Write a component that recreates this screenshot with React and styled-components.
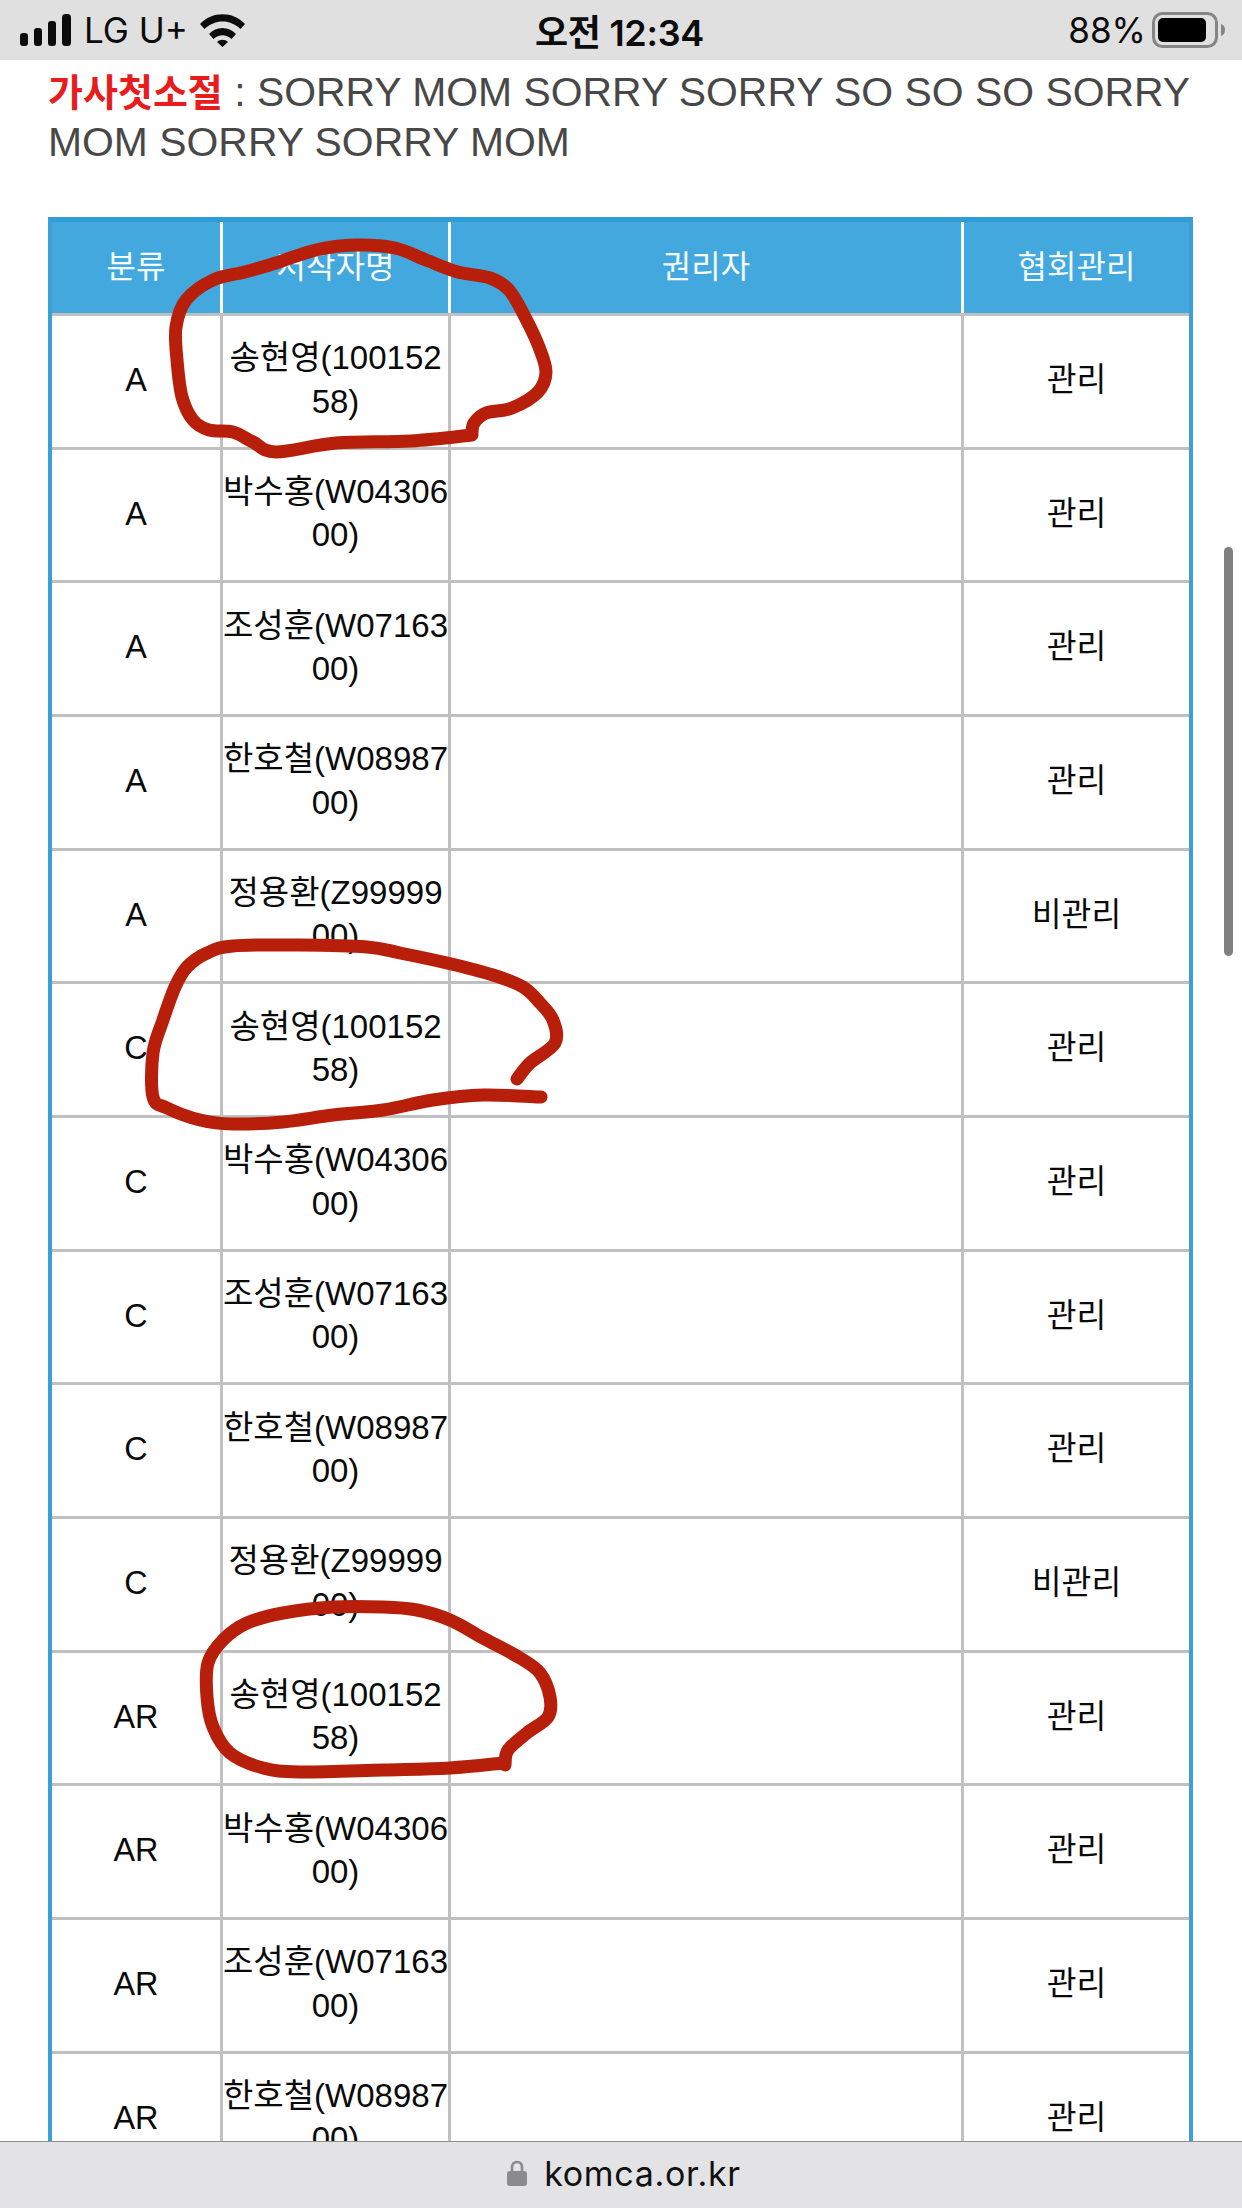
import React from 'react';
import styled, { createGlobalStyle } from 'styled-components';

const GlobalStyle = createGlobalStyle`
  html, body {
    margin: 0;
    padding: 0;
    background: #fff;
  }
  * {
    box-sizing: border-box;
  }
`;

const Page = styled.div`
  position: relative;
  display: flex;
  flex-direction: column;
  width: 1242px;
  height: 2208px;
  overflow: hidden;
  background: #fff;
  font-family: 'Liberation Sans', 'Noto Sans CJK KR', sans-serif;
`;

const StatusBar = styled.div`
  display: grid;
  grid-template-columns: 1fr auto 1fr;
  align-items: center;
  flex: none;
  height: 60px;
  padding: 0 16px 0 20px;
  background: #e0e0e0;
  color: #0c0c0c;
  font-family: Inter, 'Noto Sans CJK KR', sans-serif;
  font-size: 35px;
`;

const StatusLeft = styled.div`
  display: flex;
  align-items: center;
  gap: 12px;
`;

const StatusRight = styled.div`
  display: flex;
  align-items: center;
  justify-content: flex-end;
  gap: 6px;
`;

const Clock = styled.span`
  margin-right: 7px;
  font-weight: 600;
  font-size: 36px;
  letter-spacing: -0.3px;
`;

const Content = styled.main`
  flex: 1;
  min-height: 0;
  overflow: hidden;
  padding: 7px 49px 0 48px;
`;

const Lyric = styled.p`
  margin: 0 0 50px;
  font-size: 40.9px;
  line-height: 50px;
  color: #484848;
`;

const LyricLabel = styled.strong`
  font-size: 38px;
  line-height: 1;
  font-weight: 700;
  color: #e81c1c;
`;

const Board = styled.div`
  width: 1145px;
  border-style: solid;
  border-color: #2f9cd6 #3ba0d6;
  border-width: 5px 4px 0;
`;

const Row = styled.div`
  display: grid;
  grid-template-columns: 171px 228px 513px 1fr;
  height: 133.67px;
`;

const HeadRow = styled(Row)`
  height: 91px;
  background: #42a8de;
  color: #f4fafd;
`;

const Cell = styled.div`
  display: flex;
  align-items: center;
  justify-content: center;
  padding-bottom: 1px;
  border-right: 3px solid #c0c0c0;
  border-top: 3px solid #c0c0c0;
  font-size: 32.4px;
  line-height: 43.5px;
  color: #0a0a0a;
  text-align: center;
  &:last-child {
    border-right: 0;
  }
`;

const HeadCell = styled.div`
  display: flex;
  align-items: center;
  justify-content: center;
  padding-bottom: 7px;
  border-right: 3px solid #fff;
  font-size: 32px;
  &:last-child {
    border-right: 0;
  }
`;

const NameText = styled.span`
  width: 225px;
  padding-bottom: 2px;
  font-size: 33px;
  line-height: 43.5px;
  word-break: break-all;
`;

const BottomBar = styled.div`
  display: flex;
  align-items: center;
  justify-content: center;
  gap: 17px;
  flex: none;
  height: 67px;
  padding: 0 0 4px 6px;
  border-top: 1px solid #8e8e8e;
  background: #e3e3e5;
  color: #111;
  font-family: Inter, sans-serif;
  font-size: 34px;
  letter-spacing: 0.7px;
`;

const ScrollThumb = styled.div`
  position: absolute;
  top: 547px;
  left: 1224px;
  width: 9px;
  height: 409px;
  border-radius: 5px;
  background: #808080;
`;

const InkLayer = styled.svg`
  position: absolute;
  top: 0;
  left: 0;
  pointer-events: none;
`;

const InkStroke = styled.path`
  fill: none;
  stroke: #b81f0a;
  stroke-width: 13;
  stroke-linecap: round;
  stroke-linejoin: round;
`;

const names = ['송현영(10015258)', '박수홍(W0430600)', '조성훈(W0716300)', '한호철(W0898700)', '정용환(Z9999900)'];
const managed = ['관리', '관리', '관리', '관리', '비관리'];

const rows = [];
['A', 'C', 'AR'].forEach(kind => {
  names.forEach((name, i) => {
    rows.push({ kind, name, status: managed[i] });
  });
});

const inkMarks = [
  [
    [472, 435], [411, 441], [336, 443], [276, 452], [253, 442], [233, 432], [209, 430], [193, 420], [182, 397],
    [177, 360], [176, 327], [186, 300], [213, 280], [245, 272], [276, 263], [316, 250], [355, 245], [395, 248],
    [426, 260], [458, 272], [490, 278], [509, 290], [525, 317], [539, 347], [546, 372], [538, 392], [512, 408],
    [486, 413], [474, 423], [472, 433],
  ],
  [
    [517, 1079], [530, 1063], [555, 1043], [553, 1020], [540, 1003], [523, 987], [493, 975], [447, 963], [400, 953],
    [367, 947], [300, 945], [233, 946], [207, 953], [187, 967], [175, 987], [163, 1020], [153, 1053], [153, 1097],
    [167, 1108], [200, 1120], [233, 1124], [283, 1122], [333, 1115], [383, 1110], [433, 1100], [483, 1095], [541, 1097],
  ],
  [
    [505, 1765], [508, 1750], [527, 1733], [548, 1717], [550, 1697], [540, 1673], [520, 1658], [483, 1638], [450, 1620],
    [417, 1610], [383, 1607], [333, 1607], [283, 1613], [247, 1623], [223, 1640], [208, 1663], [207, 1697], [213, 1727],
    [230, 1753], [263, 1768], [300, 1772], [383, 1770], [450, 1768], [503, 1763],
  ],
];

// catmull-rom through the hand drawn points
const smoothPath = points => {
  let d = `M${points[0][0]} ${points[0][1]}`;
  for (let i = 0; i < points.length - 1; i++) {
    const p0 = points[i - 1] || points[i];
    const p1 = points[i];
    const p2 = points[i + 1];
    const p3 = points[i + 2] || p2;
    const c1x = p1[0] + (p2[0] - p0[0]) / 6;
    const c1y = p1[1] + (p2[1] - p0[1]) / 6;
    const c2x = p2[0] - (p3[0] - p1[0]) / 6;
    const c2y = p2[1] - (p3[1] - p1[1]) / 6;
    d += ` C${c1x} ${c1y} ${c2x} ${c2y} ${p2[0]} ${p2[1]}`;
  }
  return d;
};

const SignalIcon = () => (
  <svg width="52" height="34" viewBox="0 0 52 34" fill="#0c0c0c">
    <rect x="0" y="20" width="8" height="13" rx="3" />
    <rect x="14" y="15" width="8" height="18" rx="3" />
    <rect x="28" y="8" width="8" height="25" rx="3" />
    <rect x="42" y="1" width="9" height="32" rx="3.5" />
  </svg>
);

const WifiIcon = () => (
  <svg width="45" height="33" viewBox="0 0 45 33" fill="#0c0c0c">
    <path d="M0 10C12-3 33-3 45 10L40.5 15C30 5 15 5 4.5 15Z" />
    <path d="M9 20C16 12 29 12 36 20L31.5 25C26 20 19 20 13.5 25Z" />
    <path d="M17 28C20 25 25 25 28 28L22.5 33Z" />
  </svg>
);

const BatteryIcon = () => (
  <svg width="74" height="36" viewBox="0 0 74 36">
    <rect x="1.5" y="1.5" width="63" height="33" rx="9" fill="none" stroke="#858585" strokeWidth="3" />
    <rect x="6" y="6" width="48" height="24" rx="5" fill="#000" />
    <path d="M69 12C72 13 73 15 73 18C73 21 72 23 69 24Z" fill="#858585" />
  </svg>
);

const LockIcon = () => (
  <svg width="20" height="26" viewBox="0 0 20 26">
    <path d="M5 12V7.5C5 4 7 2 10 2C13 2 15 4 15 7.5V12" fill="none" stroke="#8b8b8d" strokeWidth="2.6" />
    <rect x="0" y="11" width="20" height="15" rx="3" fill="#8b8b8d" />
  </svg>
);

const App = () => {
  return (
    <Page>
      <GlobalStyle />
      <StatusBar>
        <StatusLeft>
          <SignalIcon />
          <span>LG U+</span>
          <WifiIcon />
        </StatusLeft>
        <Clock>오전 12:34</Clock>
        <StatusRight>
          <span>88%</span>
          <BatteryIcon />
        </StatusRight>
      </StatusBar>
      <Content>
        <Lyric>
          <LyricLabel>가사첫소절</LyricLabel> : SORRY MOM SORRY SORRY SO SO SO SORRY MOM SORRY SORRY MOM
        </Lyric>
        <Board>
          <HeadRow>
            <HeadCell>분류</HeadCell>
            <HeadCell>저작자명</HeadCell>
            <HeadCell>권리자</HeadCell>
            <HeadCell>협회관리</HeadCell>
          </HeadRow>
          {rows.map((row, i) => (
            <Row key={i}>
              <Cell>{row.kind}</Cell>
              <Cell>
                <NameText>{row.name}</NameText>
              </Cell>
              <Cell />
              <Cell>{row.status}</Cell>
            </Row>
          ))}
        </Board>
      </Content>
      <BottomBar>
        <LockIcon />
        <span>komca.or.kr</span>
      </BottomBar>
      <InkLayer width="1242" height="2141" viewBox="0 0 1242 2141">
        {inkMarks.map((points, i) => (
          <InkStroke key={i} d={smoothPath(points)} />
        ))}
      </InkLayer>
      <ScrollThumb />
    </Page>
  );
};

export default App;
